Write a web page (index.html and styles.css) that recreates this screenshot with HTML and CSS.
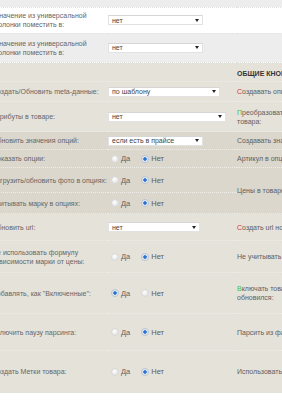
FILE: index.html
```html
<!DOCTYPE html>
<html lang="ru">
<head>
    <meta charset="UTF-8">
    <title>Настройки парсера</title>
    <link rel="stylesheet" href="styles.css">
</head>
<body>
<div class="page">
    <table class="opts top">
        <colgroup><col class="c-label"><col class="c-ctrl"><col class="c-info"></colgroup>
        <tr class="gray h7"><td colspan="3"></td></tr>
        <tr class="white h26">
            <td class="label">Значение из универсальной<br>колонки поместить в:</td>
            <td class="ctrl"><div class="select w95"><span>нет</span><i class="arrow"></i></div></td>
            <td class="info"></td>
        </tr>
        <tr class="gray h29">
            <td class="label">Значение из универсальной<br>колонки поместить в:</td>
            <td class="ctrl"><div class="select w95"><span>нет</span><i class="arrow"></i></div></td>
            <td class="info"></td>
        </tr>
    </table>

    <table class="opts main">
        <colgroup><col class="c-label"><col class="c-ctrl"><col class="c-info"></colgroup>
        <tr class="h19">
            <td class="label"></td>
            <td class="ctrl"></td>
            <td class="info head">Общие кнопки</td>
        </tr>
        <tr class="h20">
            <td class="label">Создать/Обновить meta-данные:</td>
            <td class="ctrl"><div class="select w112"><span>по шаблону</span><i class="arrow"></i></div></td>
            <td class="info"><span class="red">С</span>оздавать описание товара</td>
        </tr>
        <tr class="h30">
            <td class="label">Атрибуты в товаре:</td>
            <td class="ctrl"><div class="select w118"><span>нет</span><i class="arrow"></i></div></td>
            <td class="info"><span class="green">П</span>реобразовать атрибуты в характеристики<br>товара:</td>
        </tr>
        <tr class="dark h18">
            <td class="label">Обновить значения опций:</td>
            <td class="ctrl"><div class="select w95"><span>если есть в прайсе</span><i class="arrow"></i></div></td>
            <td class="info">Создавать значения опций, если их нет</td>
        </tr>
        <tr class="dark h18">
            <td class="label">Показать опции:</td>
            <td class="ctrl">
                <div class="radios"><i class="radio"></i><span>Да</span><i class="radio on"></i><span>Нет</span></div>
            </td>
            <td class="info">Артикул в опциях не менять</td>
        </tr>
        <tr class="dark h25">
            <td class="label">Загрузить/обновить фото в опциях:</td>
            <td class="ctrl">
                <div class="radios"><i class="radio"></i><span>Да</span><i class="radio on"></i><span>Нет</span></div>
            </td>
            <td class="info" rowspan="2">Цены в товаре обновлять из опций</td>
        </tr>
        <tr class="dark h21">
            <td class="label">Учитывать марку в опциях:</td>
            <td class="ctrl">
                <div class="radios"><i class="radio"></i><span>Да</span><i class="radio on"></i><span>Нет</span></div>
            </td>
        </tr>
        <tr class="h27">
            <td class="label">Обновить url:</td>
            <td class="ctrl"><div class="select w92"><span>нет</span><i class="arrow"></i></div></td>
            <td class="info"><span class="red">С</span>оздать url новым товарам</td>
        </tr>
        <tr class="h32">
            <td class="label">Не использовать формулу<br>зависимости марки от цены:</td>
            <td class="ctrl">
                <div class="radios"><i class="radio"></i><span>Да</span><i class="radio on"></i><span>Нет</span></div>
            </td>
            <td class="info">Не учитывать марку при обновлении</td>
        </tr>
        <tr class="h41">
            <td class="label">Добавлять, как &quot;Включенные&quot;:</td>
            <td class="ctrl">
                <div class="radios"><i class="radio on"></i><span>Да</span><i class="radio"></i><span>Нет</span></div>
            </td>
            <td class="info"><span class="green">В</span>ключать товар, если он<br>обновился:</td>
        </tr>
        <tr class="h37">
            <td class="label">Включить паузу парсинга:</td>
            <td class="ctrl">
                <div class="radios"><i class="radio"></i><span>Да</span><i class="radio on"></i><span>Нет</span></div>
            </td>
            <td class="info">Парсить из файла по частям</td>
        </tr>
        <tr class="h42 last">
            <td class="label">Создать Метки товара:</td>
            <td class="ctrl">
                <div class="radios"><i class="radio"></i><span>Да</span><i class="radio on"></i><span>Нет</span></div>
            </td>
            <td class="info">Использовать Метки из прайса</td>
        </tr>
    </table>

    <div class="footer"></div>
</div>
</body>
</html>
```

FILE: styles.css
```css
* {
    margin: 0;
    padding: 0
}

body {
    overflow: hidden;
    background-color: #fff;
    font-family: "Liberation Sans", Arial, sans-serif;
    font-size: 7px;
    color: #666;
}

.page {
    width: 282px;
    overflow: hidden;
}

.opts {
    border-collapse: collapse;
    table-layout: fixed;
}

.opts td {
    vertical-align: middle;
    white-space: nowrap;
    line-height: 9px;
}

/* верхний блок */
.top {
    width: 420px;
    margin-left: -5px;
}

.top .c-label {
    width: 113px
}

.top .c-ctrl {
    width: 129px
}

.top tr {
    border-bottom: 1px dotted #e2e2e2;
}

.top .gray {
    background-color: #ededed;
}

.top .white {
    background-color: #fff;
}

/* основной блок */
.main {
    width: 430px;
    margin-left: -8px;
    background-color: #e5e2da;
}

.main .c-label {
    width: 116px
}

.main .c-ctrl {
    width: 129px
}

.main tr {
    border-bottom: 1px dotted #efede7;
}

.main tr.last {
    border-bottom: none;
}

.main .dark {
    background-color: #dbd7cc;
}

.h7 { height: 7px }
.h18 { height: 18px }
.h19 { height: 19px }
.h20 { height: 20px }
.h21 { height: 21px }
.h25 { height: 25px }
.h26 { height: 26px }
.h27 { height: 27px }
.h29 { height: 29px }
.h30 { height: 30px }
.h32 { height: 32px }
.h37 { height: 37px }
.h41 { height: 41px }
.h42 { height: 42px }

.info {
    color: #606060;
}

.info.head {
    vertical-align: bottom;
    padding-bottom: 3px;
    font-weight: bold;
    text-transform: uppercase;
    color: #333;
}

.red {
    color: #e0312f;
}

.green {
    color: #3cc23c;
}

/* выпадающий список */
.select {
    display: flex;
    align-items: center;
    justify-content: space-between;
    height: 10px;
    padding: 0 3px 0 3px;
    background-color: #fff;
    border: 1px solid #e2e2e2;
    border-top-color: #d6d6d6;
    box-sizing: border-box;
    color: #444;
    font-size: 7px;
}

.w92 { width: 92px }
.w95 { width: 95px }
.w112 { width: 112px }
.w118 { width: 118px }

.arrow {
    width: 0;
    height: 0;
    border-top: 3px solid #222;
    border-left: 2.5px solid transparent;
    border-right: 2.5px solid transparent;
}

/* радио-кнопки */
.radios {
    display: flex;
    align-items: center;
    padding-left: 3px;
    font-size: 7.5px;
    color: #606060;
}

.radio {
    display: inline-block;
    width: 6px;
    height: 6px;
    border-radius: 50%;
    border: 1px solid #d8d8d8;
    background: radial-gradient(circle at 40% 35%, #fff 0, #e6e6e6 70%);
    margin-right: 2px;
}

.radio.on {
    border-color: #b9c3cf;
    background: radial-gradient(circle, #1f66c9 0, #3b7fd8 35%, #dfe6ee 50%, #f2f4f6 100%);
}

.radios span {
    margin-right: 11px;
}

.radios span:last-child {
    margin-right: 0;
}

.footer {
    height: 28px;
    border-bottom: 1px solid #efefef;
    box-sizing: border-box;
}
```
